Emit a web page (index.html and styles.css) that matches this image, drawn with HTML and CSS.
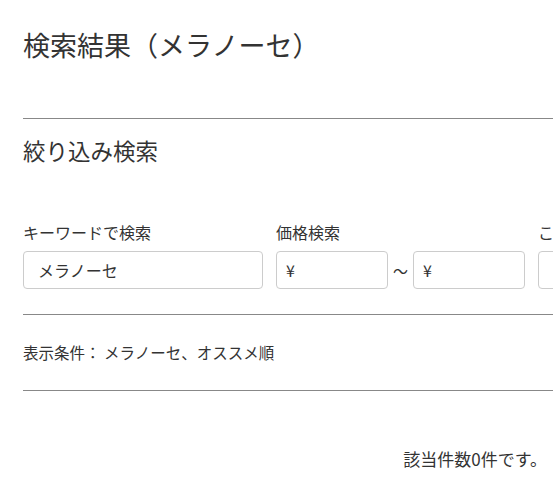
FILE: index.html
```html
<!DOCTYPE html>
<html lang="ja">
<head>
<meta charset="utf-8">
<link rel="stylesheet" href="styles.css">
</head>
<body>
<div class="page">
  <h1 class="title">検索結果（メラノーセ）</h1>
  <hr class="rule rule-top">
  <h2 class="subtitle">絞り込み検索</h2>
  <div class="filters">
    <div class="field field-keyword">
      <label class="label">キーワードで検索</label>
      <div class="input input-keyword">メラノーセ</div>
    </div>
    <div class="field field-price">
      <label class="label">価格検索</label>
      <div class="price-row">
        <div class="input input-price">¥</div>
        <span class="tilde">〜</span>
        <div class="input input-price">¥</div>
      </div>
    </div>
    <div class="field field-other">
      <label class="label">こだわり</label>
      <div class="input input-other"></div>
    </div>
  </div>
  <hr class="rule rule-mid">
  <p class="conditions">表示条件： メラノーセ、オススメ順</p>
  <hr class="rule rule-bottom">
  <p class="count">該当件数0件です。</p>
</div>
</body>
</html>
```

FILE: styles.css
```css
html, body {
  margin: 0;
  padding: 0;
  background: #fff;
  overflow: hidden;
}
body {
  font-family: "Noto Sans CJK JP", "Noto Sans", sans-serif;
  color: #333;
  width: 553px;
  height: 496px;
}
.page {
  padding-left: 23px;
}
.title {
  margin: 0;
  padding-top: 28px;
  font-size: 27px;
  font-weight: 400;
  line-height: 34px;
  height: 90px;
}
.rule {
  border: 0;
  border-top: 1px solid #888;
  margin: 0;
}
.subtitle {
  margin: 0;
  padding-top: 16px;
  font-size: 22.5px;
  font-weight: 400;
  line-height: 30px;
  height: 86px;
}
.filters {
  display: flex;
  gap: 13px;
  white-space: nowrap;
  width: 800px;
}
.field {
  display: flex;
  flex-direction: column;
}
.label {
  font-size: 16px;
  line-height: 22px;
  height: 30px;
}
.input {
  box-sizing: border-box;
  height: 38px;
  border: 1px solid #ccc;
  border-radius: 4px;
  font-size: 16px;
  line-height: 36px;
  padding-left: 14px;
}
.input-keyword { width: 240px; }
.price-row {
  display: flex;
  align-items: center;
}
.input-price {
  width: 112px;
  padding-left: 9px;
}
.tilde {
  width: 25px;
  text-align: center;
  font-size: 15px;
}
.input-other { width: 120px; }
.rule-mid { margin-top: 25px; }
.conditions {
  margin: 0;
  box-sizing: border-box;
  height: 75px;
  padding-top: 25px;
  font-size: 15.5px;
  line-height: 24px;
}
.count {
  margin: 0;
  padding-top: 56px;
  padding-right: 6px;
  text-align: right;
  font-size: 17px;
  line-height: 24px;
}
```
